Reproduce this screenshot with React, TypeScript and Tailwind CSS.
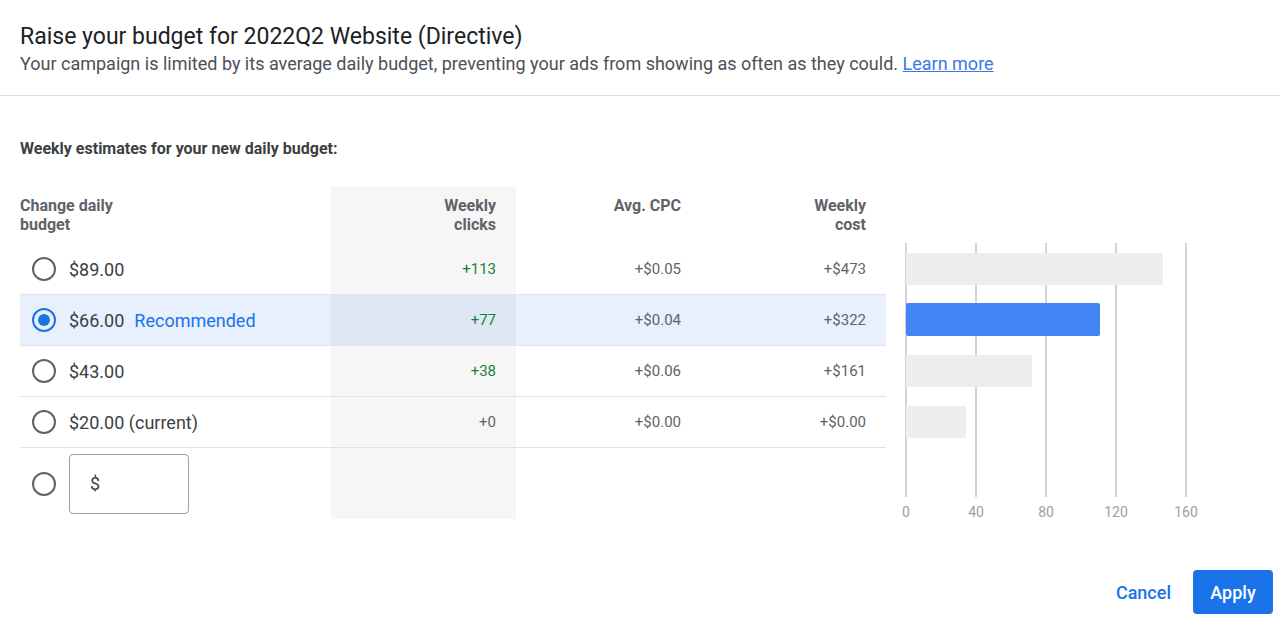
import React from 'react';

const rows = [
  { label: '$89.00', extra: '', clicks: '+113', cpc: '+$0.05', cost: '+$473', selected: false, green: true },
  { label: '$66.00', extra: 'Recommended', clicks: '+77', cpc: '+$0.04', cost: '+$322', selected: true, green: true },
  { label: '$43.00', extra: '', clicks: '+38', cpc: '+$0.06', cost: '+$161', selected: false, green: true },
  { label: '$20.00 (current)', extra: '', clicks: '+0', cpc: '+$0.00', cost: '+$0.00', selected: false, green: false },
];

const bars = [
  { y: 67, w: 257, h: 32, blue: false },
  { y: 117, w: 194, h: 33, blue: true },
  { y: 169, w: 126, h: 32, blue: false },
  { y: 220, w: 60, h: 32, blue: false },
];

const Radio: React.FC<{ checked?: boolean }> = ({ checked }) => (
  <span
    className={
      checked
        ? 'flex h-[24px] w-[24px] items-center justify-center rounded-full border-2 border-[#1a73e8]'
        : 'flex h-[24px] w-[24px] items-center justify-center rounded-full border-2 border-[#5f6368]'
    }
  >
    {checked && <span className="h-[12px] w-[12px] rounded-full bg-[#1a73e8]" />}
  </span>
);

const Chart: React.FC = () => (
  <svg width="330" height="340" viewBox="0 0 330 340" className="block">
    {[0, 1, 2, 3, 4].map((i) => (
      <line key={i} x1={20 + 70 * i} x2={20 + 70 * i} y1={57} y2={311} stroke="#d3d3d3" strokeWidth="2" />
    ))}
    {bars.map((b, i) => (
      <rect key={i} x={20} y={b.y} width={b.w} height={b.h} rx={b.blue ? 2 : 0} fill={b.blue ? '#4285f4' : '#eeeeee'} />
    ))}
    {['0', '40', '80', '120', '160'].map((t, i) => (
      <text
        key={t}
        x={20 + 70 * i}
        y={331}
        textAnchor="middle"
        fontSize="14"
        fill="#9aa0a6"
        fontFamily="Roboto, 'Liberation Sans', sans-serif"
      >
        {t}
      </text>
    ))}
  </svg>
);

const App: React.FC = () => {
  return (
    <div className="h-[625px] w-[1280px] overflow-hidden bg-white font-['Roboto','Liberation_Sans',sans-serif] text-[#202124]">
      <div className="px-[20px] pt-[22px] pb-[19px]">
        <h1 className="text-[23px] leading-[29px] text-[#202124]">Raise your budget for 2022Q2 Website (Directive)</h1>
        <p className="text-[18px] leading-[25px] text-[#4d5156]">
          Your campaign is limited by its average daily budget, preventing your ads from showing as often as they could.{' '}
          <a className="text-[#3b78e7] underline">Learn more</a>
        </p>
      </div>
      <div className="h-px bg-[#dadce0]" />

      <div className="px-[20px] pt-[42px]">
        <h2 className="text-[16px] leading-[22px] font-bold text-[#3c4043]">Weekly estimates for your new daily budget:</h2>
      </div>

      <div className="mt-[26px] flex">
        <div className="ml-[20px] w-[866px] text-[15px]">
          <div className="grid h-[58px] grid-cols-[311px_185px_185px_185px] text-[16px] font-bold leading-[19px] text-[#5f6368]">
            <div className="pt-[10px]">
              Change daily
              <br />
              budget
            </div>
            <div className="bg-[#f6f6f6] pt-[10px] pr-[20px] text-right">
              Weekly
              <br />
              clicks
            </div>
            <div className="pt-[10px] pr-[20px] text-right">Avg. CPC</div>
            <div className="pt-[10px] pr-[20px] text-right">
              Weekly
              <br />
              cost
            </div>
          </div>

          {rows.map((r) => (
            <div
              key={r.label}
              className={
                r.selected
                  ? 'grid h-[51px] grid-cols-[311px_185px_185px_185px] items-stretch border-b border-[#dfe3ea] bg-[#e8f0fe]'
                  : 'grid h-[51px] grid-cols-[311px_185px_185px_185px] items-stretch border-b border-[#e3e3e3]'
              }
            >
              <div className="flex items-center gap-[13px] pl-[12px]">
                <Radio checked={r.selected} />
                <span className="text-[18px] text-[#3c4043]">{r.label}</span>
                {r.extra && <span className="-ml-[3px] text-[18px] text-[#1a73e8]">{r.extra}</span>}
              </div>
              <div
                className={
                  r.selected
                    ? 'flex items-center justify-end bg-[#dfe7f5] pr-[20px]'
                    : 'flex items-center justify-end bg-[#f6f6f6] pr-[20px]'
                }
              >
                <span className={r.green ? 'text-[#188038]' : 'text-[#5f6368]'}>{r.clicks}</span>
              </div>
              <div className="flex items-center justify-end pr-[20px] text-[#5f6368]">{r.cpc}</div>
              <div className="flex items-center justify-end pr-[20px] text-[#5f6368]">{r.cost}</div>
            </div>
          ))}

          <div className="grid h-[71px] grid-cols-[311px_185px_185px_185px]">
            <div className="flex items-center gap-[13px] pl-[12px]">
              <Radio />
              <div className="flex h-[60px] w-[120px] items-center rounded-[4px] border border-[#9aa0a6] pl-[20px] text-[18px] text-[#3c4043]">
                $
              </div>
            </div>
            <div className="bg-[#f6f6f6]" />
            <div />
            <div />
          </div>
        </div>

        <Chart />
      </div>

      <div className="mt-[44px] flex items-center justify-end gap-[22px] pr-[7px]">
        <button className="text-[18px] font-medium text-[#1a73e8]">Cancel</button>
        <button className="h-[44px] w-[80px] rounded-[4px] bg-[#1a73e8] text-[18px] font-medium text-white">Apply</button>
      </div>
    </div>
  );
};

export default App;
